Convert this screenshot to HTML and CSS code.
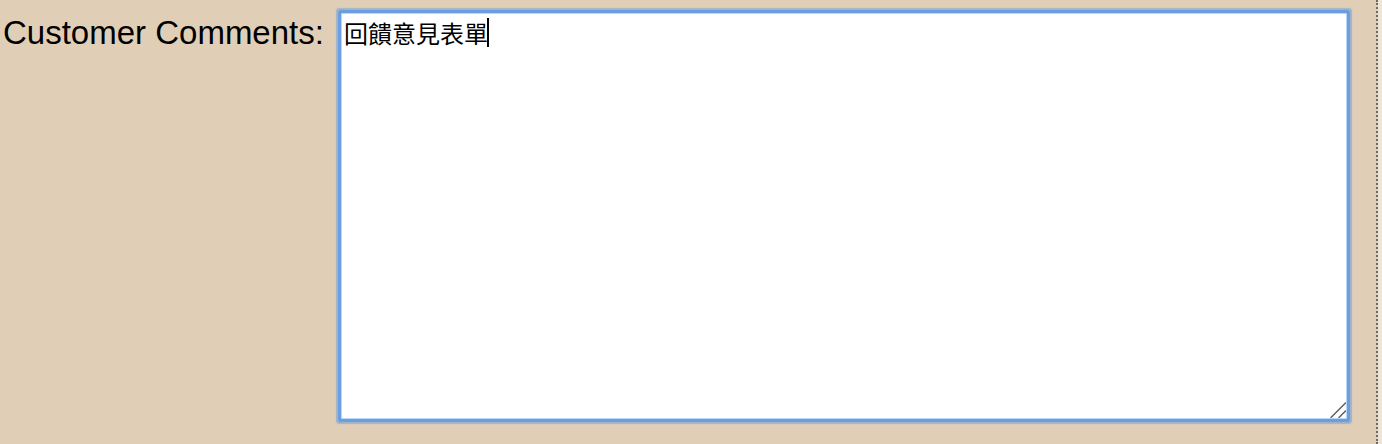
FILE: index.html
```html
<!DOCTYPE html>
<html lang="zh-Hant">
<head>
<meta charset="utf-8">
<title>Customer Comments</title>
<link rel="stylesheet" href="styles.css">
</head>
<body>
<div class="page">
  <form class="form-row">
    <label class="label" for="comments">Customer Comments:</label>
    <div class="field">
      <textarea id="comments" class="comments" spellcheck="false">回饋意見表單</textarea>
      <span class="caret"></span>
      <svg class="grip" width="16" height="16" viewBox="0 0 16 16" aria-hidden="true">
        <line x1="1" y1="15.5" x2="15.5" y2="1" stroke="#5a5a5a" stroke-width="1.4" stroke-linecap="round"/>
        <line x1="9" y1="15.5" x2="15.5" y2="9" stroke="#5a5a5a" stroke-width="1.4" stroke-linecap="round"/>
      </svg>
    </div>
  </form>
</div>
</body>
</html>
```

FILE: styles.css
```css
html, body {
  margin: 0;
  padding: 0;
  height: 100%;
}

body {
  background: #efe5d6;
  overflow: hidden;
}

.page {
  box-sizing: border-box;
  width: 1378px;
  height: 444px;
  background: #e0cfb6;
  border-right: 2px dotted #6e6c69;
}

.form-row {
  display: flex;
  align-items: flex-start;
  margin: 0;
  padding: 13px 0 0 3px;
}

.label {
  font-family: "Liberation Sans", Arial, sans-serif;
  font-size: 33px;
  line-height: 33px;
  color: #000;
  padding-top: 3px;
  width: 338px;
  flex: none;
  white-space: nowrap;
}

.field {
  position: relative;
  flex: none;
  border-radius: 4px;
}

.comments {
  display: block;
  box-sizing: border-box;
  width: 1006px;
  height: 406px;
  margin: 0;
  padding: 4px 2px;
  border: 1px solid #bcd6f4;
  border-radius: 1px;
  background: #fff;
  color: #000;
  font-family: "Noto Sans CJK TC", "Noto Sans CJK SC", sans-serif;
  font-size: 24px;
  line-height: 29px;
  outline: none;
  resize: none;
  box-shadow: 0 0 0 3px #6a9ee0, 0 0 1px 5px rgba(118, 160, 218, 0.6);
}

.caret {
  position: absolute;
  left: 146px;
  top: 5px;
  width: 2px;
  height: 29px;
  background: #000;
}

.grip {
  position: absolute;
  right: 1px;
  bottom: 1px;
  display: block;
}
```
